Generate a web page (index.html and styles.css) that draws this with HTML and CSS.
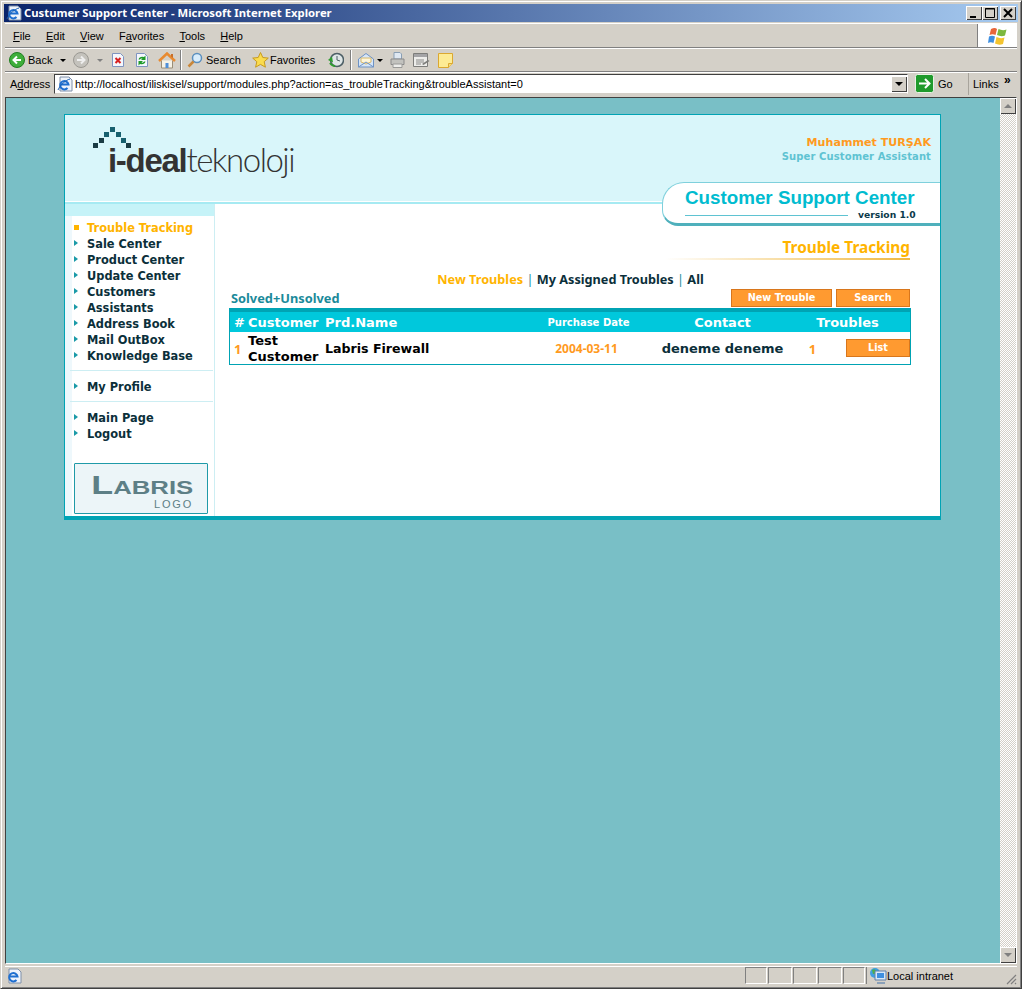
FILE: index.html
```html
<!DOCTYPE html>
<html lang="en">
<head>
    <meta charset="UTF-8">
    <title>Custumer Support Center - Microsoft Internet Explorer</title>
    <link rel="stylesheet" href="styles.css">
</head>
<body>
<div class="window">

    <!-- Title bar -->
    <div class="titlebar">
        <svg class="title-icon" width="16" height="16" viewBox="0 0 16 16"><path d="M3 1h9l3 3v11H3z" fill="#eef3fb" stroke="#7f8fa8"/><path d="M3.500 8.500h8a4.200 4.200 0 1 0-1 3.500" fill="none" stroke="#1f6fd0" stroke-width="2"/><path d="M1 14C3 9 9 4 13 3" fill="none" stroke="#1a5fb0"/></svg>
        <span class="title-text">Custumer Support Center - Microsoft Internet Explorer</span>
        <div class="win-buttons">
            <span class="win-btn"><svg width="14" height="12" viewBox="0 0 14 12"><path d="M3 9h6v2H3z" fill="#000"/></svg></span>
            <span class="win-btn"><svg width="14" height="12" viewBox="0 0 14 12"><path d="M2.500 1.500h9v9h-9z M2 2h10" fill="none" stroke="#000"/></svg></span>
            <span class="win-btn close-btn"><svg width="14" height="12" viewBox="0 0 14 12"><path d="M3 2l8 8M11 2l-8 8" stroke="#000" stroke-width="2"/></svg></span>
        </div>
    </div>

    <!-- Menu bar -->
    <div class="menubar">
        <nav class="menu-items">
            <span><u>F</u>ile</span>
            <span><u>E</u>dit</span>
            <span><u>V</u>iew</span>
            <span>F<u>a</u>vorites</span>
            <span><u>T</u>ools</span>
            <span><u>H</u>elp</span>
        </nav>
        <div class="brand-box">
            <svg width="20" height="18" viewBox="0 0 20 18"><path d="M3 2q4-2 6 0l-1.500 6q-3-1.500-6 0z" fill="#e8663a"/><path d="M10.500 2q4 2 8 .5l-1.500 6q-4 1.500-8-.5z" fill="#7cb83e"/><path d="M1 9.500q3-1.500 6 0L5.500 16q-3-1.500-5.500 0z" fill="#3f8fe0"/><path d="M8.500 10q4 2 8 .5L15 17q-4 1.500-8-.5z" fill="#f4c430"/></svg>
        </div>
    </div>

    <!-- Standard buttons -->
    <div class="toolbar">
        <svg width="16" height="16" viewBox="0 0 16 16"><circle cx="8" cy="8" r="7.500" fill="#3fae3a" stroke="#1f7d20"/><path d="M12 8H5M8 4.500L4.500 8 8 11.500" fill="none" stroke="#fff" stroke-width="2"/></svg>
        <span class="tool-label">Back</span>
        <span class="drop-arrow"></span>
        <svg width="16" height="16" viewBox="0 0 16 16"><circle cx="8" cy="8" r="7.500" fill="#c4c2bc" stroke="#9a9892"/><path d="M4 8h7M8 4.500L11.500 8 8 11.500" fill="none" stroke="#eee" stroke-width="2"/></svg>
        <span class="drop-arrow drop-off"></span>
        <svg width="14" height="16" viewBox="0 0 14 16"><path d="M1.500 1.500h8l3 3v10h-11z" fill="#f4f7fc" stroke="#7f94c0"/><path d="M4.500 6l5 5M9.500 6l-5 5" stroke="#d82020" stroke-width="2"/></svg>
        <svg width="14" height="16" viewBox="0 0 14 16"><path d="M1.500 1.500h8l3 3v10h-11z" fill="#f4f7fc" stroke="#7f94c0"/><path d="M3.500 7.500q1-3.500 5.500-2.500l1.500-1.500v4.500H6l1.500-1.500q-2-.5-2.500 1zM10.500 9.500q-1 3.500-5.500 2.500l-1.500 1.500V9H8l-1.500 1.500q2 .5 2.500-1z" fill="#1f9a28"/></svg>
        <svg width="18" height="17" viewBox="0 0 18 17"><path d="M3.500 8.500v7.500h11V8.500" fill="#f6f2e6" stroke="#9a8e78"/><path d="M1 9l8-7.500L17 9" fill="none" stroke="#e88a30" stroke-width="2.500"/><path d="M7.500 16v-5h3v5" fill="#4f8fd8"/><path d="M13 2h2v4l-2-1.500z" fill="#c86f2a"/></svg>
        <span class="tool-sep"></span>
        <svg width="16" height="16" viewBox="0 0 16 16"><circle cx="10" cy="6" r="4.500" fill="#d8ecfb" stroke="#5b8fbe" stroke-width="1.500"/><path d="M6.500 9.500L1.500 14.500" stroke="#c9873a" stroke-width="2.500"/></svg>
        <span class="tool-label">Search</span>
        <svg width="17" height="16" viewBox="0 0 17 16"><path d="M8.500 .5l2.300 5 5.500.6-4.100 3.600 1.200 5.500-4.900-2.800-4.900 2.800 1.200-5.500L.7 6.100l5.500-.6z" fill="#fbdc4e" stroke="#c69a20"/></svg>
        <span class="tool-label">Favorites</span>
        <svg width="16" height="16" viewBox="0 0 16 16"><circle cx="9" cy="8" r="6.500" fill="#dfe6e6" stroke="#4d5f66" stroke-width="1.500"/><path d="M9 4v4l3 1" fill="none" stroke="#4d5f66"/><path d="M0 8l4-3.500 1 6z" fill="#2f9c30"/><path d="M2 11q2 3 5 3" fill="none" stroke="#2f9c30" stroke-width="2"/></svg>
        <span class="tool-sep"></span>
        <svg width="16" height="15" viewBox="0 0 16 15"><path d="M.5 6L8 .5 15.500 6v8H.5z" fill="#d6e6f8" stroke="#6f93c4"/><path d="M3 5h10v4L8 11 3 9z" fill="#fff6d8" stroke="#d8b86a"/><path d="M.5 14L8 9l7.500 5" fill="none" stroke="#6f93c4"/></svg>
        <span class="drop-arrow drop-mail"></span>
        <svg width="15" height="16" viewBox="0 0 15 16"><path d="M4 .5h6l1.500 1.500v5h-7.500z" fill="#dfe8f2" stroke="#8a9fb4"/><path d="M1 7h13v5.500H1z" fill="#c2c2be" stroke="#8a8a8a"/><path d="M3 12h9v3.500H3z" fill="#ededea" stroke="#9a9a98"/></svg>
        <svg width="17" height="15" viewBox="0 0 17 15"><path d="M.5.5h14v13H.5z" fill="#ededea" stroke="#7d7d7a"/><path d="M1 1h13v3H1z" fill="#a4a4a6"/><path d="M3 7h8M3 9h8M3 11h5" stroke="#8a8a88"/><path d="M9 11l6-4 1.500 1-6 4z" fill="#7d7d7a"/></svg>
        <svg width="15" height="15" viewBox="0 0 15 15"><path d="M.5.5h14v10l-4 4H.5z" fill="#fdeb94" stroke="#dba830"/><path d="M14.500 10.500h-4v4" fill="#f5d97a" stroke="#dba830"/></svg>
    </div>

    <!-- Address bar -->
    <div class="addressbar">
        <span class="addr-label">A<u>d</u>dress</span>
        <div class="addr-input">
            <svg width="16" height="16" viewBox="0 0 16 16"><path d="M3 1h9l3 3v11H3z" fill="#eef3fb" stroke="#7f8fa8"/><path d="M3.500 8.500h8a4.200 4.200 0 1 0-1 3.500" fill="none" stroke="#1f6fd0" stroke-width="2"/><path d="M1 14C3 9 9 4 13 3" fill="none" stroke="#1a5fb0"/></svg>
            <span class="addr-url">http://localhost/iliskisel/support/modules.php?action=as_troubleTracking&amp;troubleAssistant=0</span>
            <span class="combo-btn"><span class="combo-arrow"></span></span>
        </div>
        <svg class="go-icon" width="19" height="19" viewBox="0 0 19 19"><rect x=".5" y=".5" width="18" height="18" rx="2" fill="#1f9a2c" stroke="#e8f2e4"/><path d="M4 9.500h10M10 5l4.500 4.500L10 14" fill="none" stroke="#fff" stroke-width="2"/></svg>
        <span class="go-label">Go</span>
        <span class="links-label">Links</span>
        <span class="links-more">&raquo;</span>
    </div>

    <!-- Browser viewport -->
    <div class="viewport">
        <div class="page">
            <div class="card">

                <div class="card-head">
                    <div class="logo">
                        <svg class="logo-roof" width="38" height="21" viewBox="0 0 38 21">
                            <path d="M17 0h5v5h-5z M11 5h5v5h-5z M23 5h5v5h-5z M28 11h5v5h-5z" fill="#17606e"/>
                            <path d="M6 11h5v5H6z M0 16h5v5H0z M33 16h5v5h-5z" fill="#1b3c44"/>
                        </svg>
                        <span class="logo-bold">i-deal</span><span class="logo-thin">teknoloji</span>
                    </div>
                    <div class="user-box">
                        <div class="user-name">Muhammet TURŞAK</div>
                        <div class="user-role">Super Customer Assistant</div>
                    </div>
                </div>

                <div class="app-tab">
                    <div class="app-title">Customer Support Center</div>
                    <div class="app-sub">
                        <span class="app-line"></span>
                        <span class="app-version">version 1.0</span>
                    </div>
                </div>

                <div class="card-body">
                    <aside class="sidebar">
                        <div class="side-band"></div>
                        <ul class="side-menu">
                            <li class="active">Trouble Tracking</li>
                            <li>Sale Center</li>
                            <li>Product Center</li>
                            <li>Update Center</li>
                            <li>Customers</li>
                            <li>Assistants</li>
                            <li>Address Book</li>
                            <li>Mail OutBox</li>
                            <li>Knowledge Base</li>
                        </ul>
                        <ul class="side-menu divided">
                            <li>My Profile</li>
                        </ul>
                        <ul class="side-menu divided">
                            <li>Main Page</li>
                            <li>Logout</li>
                        </ul>
                        <div class="client-logo">
                            <span class="client-name">Labris</span>
                            <span class="client-sub">LOGO</span>
                        </div>
                    </aside>

                    <main class="content">
                        <div class="page-head">
                            <h1>Trouble Tracking</h1>
                            <div class="page-rule"></div>
                        </div>
                        <div class="filters">
                            <a class="on">New Troubles</a> <i>|</i> <a>My Assigned Troubles</a> <i>|</i> <a>All</a>
                        </div>
                        <div class="list-bar">
                            <span class="list-state">Solved+Unsolved</span>
                            <div class="list-actions">
                                <span class="btn btn-new">New Trouble</span>
                                <span class="btn btn-search">Search</span>
                            </div>
                        </div>
                        <table class="trouble-table">
                            <colgroup>
                                <col class="c-num"><col class="c-cust"><col class="c-prod"><col class="c-date"><col class="c-cont"><col class="c-trb"><col class="c-act">
                            </colgroup>
                            <thead>
                                <tr>
                                    <th class="left">#</th>
                                    <th class="left">Customer</th>
                                    <th class="left">Prd.Name</th>
                                    <th class="th-date">Purchase Date</th>
                                    <th>Contact</th>
                                    <th colspan="2">Troubles</th>
                                </tr>
                            </thead>
                            <tbody>
                                <tr>
                                    <td class="num">1</td>
                                    <td class="strong cust"><div class="two-line">Test Customer</div></td>
                                    <td class="strong prod">Labris Firewall</td>
                                    <td class="date">2004-03-11</td>
                                    <td class="strong contact">deneme deneme</td>
                                    <td class="num mid">1</td>
                                    <td class="act"><span class="btn btn-list">List</span></td>
                                </tr>
                            </tbody>
                        </table>
                    </main>
                </div>
            </div>
        </div>

        <div class="scrollbar">
            <span class="scroll-btn"><span class="up"></span></span>
            <span class="scroll-btn"><span class="down"></span></span>
        </div>
    </div>

    <!-- Status bar -->
    <div class="statusbar">
        <div class="status-main">
            <svg width="16" height="16" viewBox="0 0 16 16"><path d="M3 1h9l3 3v11H3z" fill="#eef3fb" stroke="#7f8fa8"/><path d="M3.500 8.500h8a4.200 4.200 0 1 0-1 3.500" fill="none" stroke="#1f6fd0" stroke-width="2"/></svg>
        </div>
        <span class="status-cell"></span>
        <span class="status-cell w25"></span>
        <span class="status-cell w25"></span>
        <span class="status-cell w25"></span>
        <span class="status-cell"></span>
        <div class="status-zone">
            <svg width="18" height="18" viewBox="0 0 18 18"><circle cx="6" cy="6" r="5" fill="#3f9fe0"/><path d="M3 3q3-2 4 1t-3 3z" fill="#4db04a"/><path d="M6 4h11v9H6z" fill="#d8e8f8" stroke="#5f7fa8"/><path d="M8 6h7v5H8z" fill="#3f8fe0"/><path d="M8 15h8v2H8z" fill="#8aa0b8"/></svg>
            <span>Local intranet</span>
        </div>
        <svg class="grip" width="11" height="11" viewBox="0 0 11 11"><path d="M10 1L1 10M10 5l-5 5M10 9l-1 1" stroke="#808080" stroke-width="1.200"/></svg>
    </div>
</div>
</body>
</html>
```

FILE: styles.css
```css
/* Global */
* {
    box-sizing: border-box;
}

html, body {
    margin: 0;
    height: 100%;
    overflow: hidden;
}

body {
    background-color: #d4d0c8;
    font-family: "Liberation Sans", sans-serif;
    font-size: 11px;
    color: #000;
}

.window {
    width: 1022px;
    height: 989px;
    padding: 4px 4px 3px 4px;
    display: flex;
    flex-direction: column;
    background-color: #d4d0c8;
    border: 1px solid #d4d0c8;
    border-right-color: #404040;
    border-bottom-color: #404040;
    box-shadow: inset 1px 1px 0 #fff, inset -1px -1px 0 #808080;
}

/* Title bar */
.titlebar {
    height: 18px;
    margin: -1px -1px 0 -1px;
    flex: none;
    display: flex;
    align-items: center;
    padding: 0 2px 0 2px;
    background: linear-gradient(to right, #0a246a, #a6caf0);
    color: #fff;
}

.title-icon {
    flex: none;
}

.title-text {
    margin-left: 2px;
    margin-top: -2px;
    font-family: "Noto Sans", sans-serif;
    font-weight: 700;
    font-size: 11.300px;
}

.win-buttons {
    margin-left: auto;
    display: flex;
}

.win-btn {
    width: 16px;
    height: 14px;
    margin-left: 0;
    display: flex;
    align-items: center;
    justify-content: center;
    background-color: #d4d0c8;
    box-shadow: inset 1px 1px 0 #fff, inset -1px -1px 0 #404040;
}

.close-btn {
    margin-left: 2px;
}

/* Menu bar */
.menubar {
    height: 25px;
    margin-top: 1px;
    flex: none;
    display: flex;
    align-items: center;
    border-top: 1px solid #fff;
    border-bottom: 1px solid #808080;
}

.menu-items {
    display: flex;
    gap: 15.200px;
    padding-left: 8px;
}

.brand-box {
    margin-left: auto;
    width: 40px;
    height: 23px;
    display: flex;
    align-items: center;
    justify-content: center;
    background-color: #fff;
    border-left: 1px solid #808080;
}

/* Toolbar */
.toolbar {
    height: 24px;
    flex: none;
    display: grid;
    grid-template-columns: 16px 35px 13px 16px 22px 24px 23px 22px 7px 16px 49px 15px 61px 22px 8px 18px 14px 23px 25px 20px;
    align-items: center;
    justify-items: start;
    padding-left: 4px;
    border-top: 1px solid #fff;
    border-bottom: 1px solid #808080;
}

.tool-label {
    padding-left: 3px;
    white-space: nowrap;
}

.tool-sep {
    width: 2px;
    height: 20px;
    border-left: 1px solid #808080;
    border-right: 1px solid #fff;
}

.drop-arrow {
    width: 0;
    height: 0;
    border: 3px solid transparent;
    border-top: 3px solid #000;
    border-bottom: 0;
}

.drop-off {
    margin-left: 8px;
    border-top-color: #808080;
}

.drop-mail {
    margin-left: 1px;
}

/* Address bar */
.addressbar {
    height: 25px;
    flex: none;
    display: flex;
    align-items: center;
    padding-bottom: 3px;
    border-top: 1px solid #fff;
}

.addr-label {
    width: 49px;
    padding-left: 5px;
    flex: none;
}

.addr-input {
    width: 854px;
    height: 20px;
    flex: none;
    display: flex;
    align-items: center;
    padding-left: 2px;
    background-color: #fff;
    border: 1px solid #808080;
    border-top-color: #404040;
    border-left-color: #404040;
    border-bottom-color: #d4d0c8;
    border-right-color: #fff;
}

.addr-url {
    margin-left: 2px;
    white-space: nowrap;
}

.combo-btn {
    margin-left: auto;
    width: 16px;
    height: 16px;
    display: flex;
    align-items: center;
    justify-content: center;
    background-color: #d4d0c8;
    box-shadow: inset 1px 1px 0 #fff, inset -1px -1px 0 #404040;
}

.combo-arrow {
    border: 4px solid transparent;
    border-top: 4px solid #000;
    border-bottom: 0;
}

.go-icon {
    margin-left: 7px;
    flex: none;
}

.go-label {
    margin-left: 4px;
    width: 30px;
}

.links-label {
    padding-left: 4px;
    border-left: 1px solid #a8a49c;
    line-height: 22px;
    width: 36px;
}

.links-more {
    font-weight: 700;
    font-size: 12px;
    margin-top: -7px;
}

/* Viewport */
.viewport {
    flex: 1;
    min-height: 0;
    margin: 0 0 2px 0;
    display: flex;
    border: 1px solid #404040;
    border-right-color: #fff;
    border-bottom-color: #fff;
    background-color: #79bfc6;
}

.page {
    flex: 1;
    padding: 16px 0 0 58px;
    font-family: "DejaVu Sans", sans-serif;
}

.scrollbar {
    width: 16px;
    display: flex;
    flex-direction: column;
    justify-content: space-between;
    background: repeating-conic-gradient(#d4d0c8 0 25%, #fff 0 50%) 0 0 / 2px 2px;
}

.scroll-btn {
    width: 16px;
    height: 16px;
    display: flex;
    align-items: center;
    justify-content: center;
    background-color: #d4d0c8;
    box-shadow: inset 1px 1px 0 #fff, inset -1px -1px 0 #404040;
}

.up {
    border: 4px solid transparent;
    border-bottom: 4px solid #808080;
    border-top: 0;
}

.down {
    border: 4px solid transparent;
    border-top: 4px solid #808080;
    border-bottom: 0;
}

/* Card */
.card {
    position: relative;
    width: 877px;
    height: 406px;
    background-color: #fff;
    border: 1px solid #00a3b4;
    border-bottom-width: 4px;
}

.card-head {
    height: 89px;
    display: flex;
    justify-content: space-between;
    background-color: #d9f6fa;
    border-bottom: 2px solid #a6eaf2;
    box-shadow: inset 0 -1px 0 #fff;
}

.logo {
    position: relative;
    padding: 24px 0 0 43px;
    white-space: nowrap;
    color: #333;
    font-family: "Liberation Sans", sans-serif;
    line-height: 40px;
}

.logo-roof {
    position: absolute;
    left: 28px;
    top: 12px;
}

.logo-bold {
    font-size: 33px;
    font-weight: 700;
    letter-spacing: -1.300px;
}

.logo-thin {
    font-family: Lato, sans-serif;
    font-size: 33px;
    font-weight: 300;
    letter-spacing: -1.500px;
}

.user-box {
    padding: 20px 9px 0 0;
    text-align: right;
    font-weight: 700;
}

.user-name {
    font-size: 11.100px;
    line-height: 15px;
    color: #ff9a1e;
}

.user-role {
    font-size: 10px;
    line-height: 13px;
    letter-spacing: .1px;
    color: #5fc3d2;
}

/* Title tab over the header */
.app-tab {
    position: absolute;
    top: 67px;
    right: 0;
    width: 278px;
    height: 44px;
    padding: 5px 0 0 22px;
    background-color: #fff;
    border: 1px solid #7fd0dc;
    border-right: 0;
    border-bottom: 3px solid #4fb0bc;
    border-radius: 22px 0 0 16px;
}

.app-title {
    font-family: "Liberation Sans", sans-serif;
    font-size: 18.800px;
    line-height: 20px;
    font-weight: 700;
    color: #00bcd0;
    white-space: nowrap;
}

.app-sub {
    display: flex;
    align-items: center;
    padding-top: 2px;
}

.app-line {
    width: 163px;
    height: 1px;
    background-color: #5fc3d2;
}

.app-version {
    margin-left: 10px;
    font-size: 9.200px;
    line-height: 10px;
    font-weight: 700;
    color: #0b3a4a;
}

/* Body */
.card-body {
    height: 312px;
    display: flex;
}

/* Sidebar */
.sidebar {
    width: 150px;
    flex: none;
    display: flex;
    flex-direction: column;
    background: linear-gradient(to right, #eef8fc 7px, #fff 7px);
    border-right: 1px solid #cdeef3;
}

.side-band {
    height: 12px;
    flex: none;
    background-color: #c6f3f8;
}

.side-menu {
    list-style: none;
    margin: 4px 0 0 0;
    padding: 0 0 6px 22px;
}

.side-menu.divided {
    margin: 0 1px 0 5px;
    padding: 8px 0 6px 17px;
    border-top: 1px solid #cdeef3;
}

.side-menu li {
    position: relative;
    height: 16px;
    line-height: 16px;
    font-size: 11.400px;
    font-weight: 700;
    color: #0b2f3a;
    white-space: nowrap;
}

.side-menu li::before {
    content: "";
    position: absolute;
    left: -13px;
    top: 4px;
    border: 3px solid transparent;
    border-left: 4px solid #1a9aa8;
    border-right: 0;
}

.side-menu li.active {
    color: #ffb400;
}

.side-menu li.active::before {
    top: 5px;
    width: 5px;
    height: 5px;
    border: 0;
    background-color: #ffb400;
}

.client-logo {
    width: 134px;
    height: 51px;
    margin: 15px 0 0 9px;
    padding: 10px 14px 0 0;
    display: flex;
    flex-direction: column;
    align-items: flex-end;
    background-color: #ecf5f8;
    border: 1px solid #1f9aa8;
    border-radius: 1px;
    color: #5d7f86;
}

.client-name {
    font-family: "Liberation Sans", sans-serif;
    font-variant: small-caps;
    font-weight: 700;
    font-size: 25px;
    line-height: 22px;
    transform: scaleX(1.430);
    transform-origin: right;
}

.client-sub {
    font-family: "Liberation Sans", sans-serif;
    font-size: 11px;
    line-height: 12px;
    letter-spacing: 1.800px;
    margin-top: 2px;
}

/* Main content */
.content {
    flex: 1;
    padding-left: 14px;
    font-family: "Noto Sans", sans-serif;
}

.page-head {
    width: 682px;
    margin-top: 33px;
    text-align: right;
}

.page-head h1 {
    margin: 0;
    padding-right: 1px;
    height: 21px;
    line-height: 21px;
    font-size: 15.400px;
    font-weight: 700;
    color: #ffb400;
}

.page-rule {
    width: 245px;
    height: 2px;
    margin: 0 1px 0 auto;
    background: linear-gradient(to right, #fff, #f0b840);
}

.filters {
    width: 682px;
    height: 18px;
    margin-top: 10px;
    padding-left: 1px;
    line-height: 18px;
    text-align: center;
    font-size: 12.700px;
    font-weight: 700;
    color: #0b2f3a;
}

.filters .on {
    color: #ffb400;
}

.filters i {
    font-style: normal;
    font-weight: 400;
    color: #1a8a9a;
}

.list-bar {
    width: 682px;
    height: 19px;
    margin-top: 1px;
    padding: 0 1px 0 2px;
    display: flex;
    justify-content: space-between;
}

.list-state {
    font-size: 12.800px;
    font-weight: 700;
    line-height: 18px;
    color: #1a8a9a;
}

.list-actions {
    display: flex;
    gap: 4px;
}

.btn {
    display: block;
    height: 18px;
    line-height: 16px;
    text-align: center;
    font-family: "DejaVu Sans", sans-serif;
    font-size: 9.700px;
    font-weight: 700;
    color: #fff;
    background-color: #ff9a30;
    border: 1px solid #d8761c;
}

.btn-new {
    width: 101px;
}

.btn-search {
    width: 74px;
}

.btn-list {
    width: 64px;
    margin-left: auto;
}

/* Table */
.trouble-table {
    width: 682px;
    table-layout: fixed;
    border-collapse: separate;
    border-spacing: 0;
    border: 1px solid #00a3b4;
    border-top-width: 4px;
    font-family: "DejaVu Sans", sans-serif;
}

.c-num { width: 18px; }
.c-cust { width: 77px; }
.c-prod { width: 180px; }
.c-date { width: 155px; }
.c-cont { width: 125px; }
.c-trb { width: 55px; }
.c-act { width: 70px; }

.trouble-table th {
    height: 20px;
    padding: 0;
    background-color: #00c8dc;
    color: #fff;
    font-size: 13px;
    font-weight: 700;
    white-space: nowrap;
}

.trouble-table th.left {
    text-align: left;
}

.trouble-table th:first-child {
    padding-left: 4px;
}

.trouble-table th.th-date {
    padding-left: 12px;
    font-size: 10px;
}

.trouble-table td {
    height: 32px;
    padding: 2px 0 0 0;
    font-size: 13px;
    line-height: 16px;
    white-space: normal;
}

.trouble-table .strong {
    font-weight: 700;
    color: #000;
}

.trouble-table .cust {
    padding-top: 1px;
}

.two-line {
    margin-bottom: -1px;
}

.trouble-table .prod {
    font-size: 12.600px;
}

.trouble-table .contact {
    text-align: center;
    color: #0b2f3a;
    white-space: nowrap;
}

.trouble-table .num {
    padding-left: 4px;
    font-family: "Noto Sans", sans-serif;
    font-weight: 700;
    font-size: 13px;
    color: #ff9a1e;
}

.trouble-table .mid {
    padding-left: 0;
    text-align: center;
}

.trouble-table .date {
    padding-left: 8px;
    text-align: center;
    font-family: "Noto Sans", sans-serif;
    font-weight: 700;
    font-size: 12px;
    color: #ff9a1e;
}

.trouble-table .act {
    padding-top: 0;
}

/* Status bar */
.statusbar {
    height: 19px;
    flex: none;
    display: flex;
    align-items: center;
    box-shadow: inset 0 1px 0 #fff;
}

.status-main {
    width: 739px;
    height: 18px;
    padding-left: 1px;
    flex: none;
    display: flex;
    align-items: center;
}

.status-cell {
    width: 22px;
    height: 17px;
    margin-left: 1px;
    flex: none;
    border: 1px solid #fff;
    border-top-color: #808080;
    border-left-color: #808080;
}

.status-cell.w25 {
    width: 24px;
}

.status-zone {
    width: 139px;
    height: 17px;
    margin-left: 1px;
    padding-left: 2px;
    flex: none;
    display: flex;
    align-items: center;
    border-left: 1px solid #808080;
}

.grip {
    flex: none;
    margin-left: auto;
    align-self: flex-end;
}
```
